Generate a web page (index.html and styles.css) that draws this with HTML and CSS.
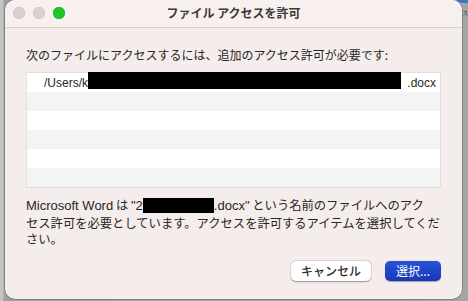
FILE: index.html
```html
<!DOCTYPE html>
<html lang="ja">
<head>
<meta charset="utf-8">
<link rel="stylesheet" href="styles.css">
</head>
<body>
<div class="desk">
  <div class="window">
    <div class="titlebar">
      <div class="lights">
        <span class="light grey"></span>
        <span class="light grey"></span>
        <span class="light green"></span>
      </div>
      <div class="title">ファイル アクセスを許可</div>
    </div>
    <div class="content">
      <p class="lead">次のファイルにアクセスするには、追加のアクセス許可が必要です:</p>
      <div class="list">
        <div class="row">
          <span class="path">/Users/k</span><span class="redact path-redact"></span><span class="ext">.docx</span>
        </div>
        <div class="row alt"></div>
        <div class="row"></div>
        <div class="row alt"></div>
        <div class="row"></div>
        <div class="row alt"></div>
      </div>
      <p class="msg"><span class="latin">Microsoft Word</span> は <span class="latin">"2</span><span class="redact msg-redact"></span><span class="latin">.docx"</span> という名前のファイルへのアク<br>セス許可を必要としています。アクセスを許可するアイテムを選択してくだ<br>さい。</p>
      <div class="buttons">
        <button class="btn cancel">キャンセル</button>
        <button class="btn primary">選択...</button>
      </div>
    </div>
  </div>
  <div class="side">
    <span class="side-blue"></span>
    <span class="side-text">ス</span>
  </div>
</div>
</body>
</html>
```

FILE: styles.css
```css
* { box-sizing: border-box; }
html, body {
  margin: 0;
  padding: 0;
  width: 468px;
  height: 301px;
  overflow: hidden;
}
body {
  background: #a6a6a6;
  font-family: "Liberation Sans", "Noto Sans CJK JP", sans-serif;
  color: #262626;
}
.desk {
  display: flex;
  height: 301px;
  background: linear-gradient(to right, #c4c4c4 0, #c4c4c4 3px, #9e9e9e 4px, #9e9e9e 5px, #a4a4a4 462px);
}
.window {
  margin-left: 5px;
  width: 457px;
  height: 299px;
  flex: none;
  background: #f5edeb;
  border-radius: 10px;
  box-shadow: 0 0 0 0.5px rgba(0,0,0,0.35);
  display: flex;
  flex-direction: column;
  overflow: hidden;
}
.titlebar {
  height: 28px;
  flex: none;
  background: #f8f0ef;
  border-bottom: 1px solid #d9d1d0;
  display: flex;
  align-items: center;
  position: relative;
}
.lights {
  display: flex;
  gap: 8px;
  padding-left: 8px;
  margin-top: -1px;
}
.light {
  width: 12px;
  height: 12px;
  border-radius: 50%;
}
.light.grey {
  background: #d8d2d2;
  box-shadow: inset 0 0 0 0.5px #c7c0c0;
}
.light.green {
  background: #1ec52a;
  box-shadow: inset 0 0 0 0.5px #18a821;
}
.title {
  position: absolute;
  left: 0;
  right: 0;
  top: 5px;
  text-align: center;
  font-family: "Noto Sans CJK JP", sans-serif;
  font-weight: bold;
  font-size: 12px;
  line-height: 16px;
  color: #3a3a3a;
}
.content {
  flex: 1;
  display: flex;
  flex-direction: column;
  padding: 19px 21px 0 21px;
}
.lead {
  margin: 0;
  font-family: "Noto Sans CJK JP", sans-serif;
  font-size: 12px;
  line-height: 16px;
}
.list {
  margin-top: 9px;
  border: 1px solid #e3dfdf;
  background: #fff;
}
.row {
  height: 19px;
  display: flex;
  align-items: center;
  padding: 0 4px 0 17px;
  font-size: 12px;
  background: #ffffff;
}
.row.alt { background: #f3f4f3; }
.path { flex: none; }
.redact {
  display: inline-block;
  background: #000;
}
.path-redact {
  flex: 1;
  height: 17px;
  position: relative;
  top: -2px;
}
.ext { margin-left: 6px; }
.msg {
  margin: 9px 0 0 0;
  font-family: "Noto Sans CJK JP", sans-serif;
  font-size: 12.3px;
  line-height: 16.5px;
}
.latin {
  font-family: "Liberation Sans", sans-serif;
  font-size: 13px;
}
.msg-redact {
  width: 71px;
  height: 15px;
  vertical-align: -3px;
}
.buttons {
  margin-top: auto;
  margin-bottom: 18px;
  display: flex;
  justify-content: flex-end;
  gap: 14px;
}
.btn {
  height: 20px;
  border: none;
  border-radius: 5px;
  font-family: "Noto Sans CJK JP", sans-serif;
  font-size: 12px;
  line-height: 20px;
  padding: 0;
}
.cancel {
  width: 80px;
  background: #ffffff;
  color: #2e2e2e;
  font-weight: 500;
  box-shadow: 0 0.5px 1.5px rgba(0,0,0,0.35), 0 0 0 0.5px rgba(0,0,0,0.08);
}
.primary {
  width: 56px;
  background: linear-gradient(#2853d6, #1737b8);
  color: #ffffff;
  box-shadow: 0 0.5px 1px rgba(0,0,0,0.3);
}
.side {
  flex: 1;
  position: relative;
}
.side-blue {
  position: absolute;
  left: -6px;
  top: -6px;
  width: 16px;
  height: 9px;
  border-radius: 50%;
  background: #3b74c9;
}
.side-text {
  position: absolute;
  left: 0;
  top: 9px;
  font-family: "Noto Sans CJK JP", sans-serif;
  font-size: 6px;
  line-height: 8px;
  color: #3a3a3a;
}
```
